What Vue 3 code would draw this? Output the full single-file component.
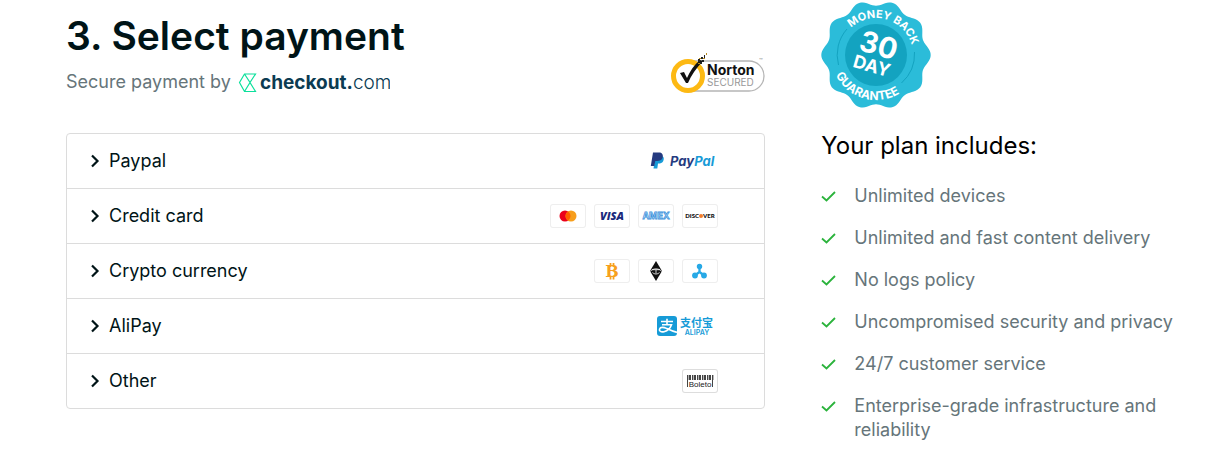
<script setup>
import { ref } from 'vue'

const selected = ref('')
const methods = [
  { id: 'paypal', label: 'Paypal' },
  { id: 'card', label: 'Credit card' },
  { id: 'crypto', label: 'Crypto currency' },
  { id: 'alipay', label: 'AliPay' },
  { id: 'other', label: 'Other' },
]
const features = [
  'Unlimited devices',
  'Unlimited and fast content delivery',
  'No logs policy',
  'Uncompromised security and privacy',
  '24/7 customer service',
  'Enterprise-grade infrastructure and reliability',
]

// Ten-lobed outline of the guarantee seal
const sealPoints = Array.from({ length: 180 }, (_, i) => {
  const a = (i * Math.PI) / 90
  const r = 52 + 2.7 * Math.cos(10 * a)
  return `${(55 + r * Math.cos(a)).toFixed(2)},${(55 + r * Math.sin(a)).toFixed(2)}`
}).join(' ')

const bars = [0, 2, 3, 5, 7, 8, 10, 12, 13, 15, 17, 18, 20, 22, 23, 25]
</script>

<template>
  <main class="page">
    <section class="payment">
      <h1>3. Select payment</h1>
      <div class="secure">
        <p class="by">
          <span>Secure payment by</span>
          <svg class="checkout" width="152" height="24" viewBox="0 0 152 24" role="img" aria-label="checkout.com">
            <path d="M1.500 12.500 6.500 4h11L12 12.500l5.500 9h-11zM6.500 4 12 12.500l-5.500 9" fill="none" stroke="#0be09b" stroke-width="1.200" />
            <text x="22" y="19" class="brand"><tspan font-weight="700">checkout.</tspan><tspan font-weight="300">com</tspan></text>
          </svg>
        </p>
        <svg class="norton" width="95" height="42" viewBox="0 0 95 42" role="img" aria-label="Norton Secured">
          <rect x="4" y="9" width="90" height="30" rx="15" fill="#fff" stroke="#b5b5b5" stroke-width="1.300" />
          <circle cx="18" cy="24" r="14.500" fill="#fff" stroke="#fdb913" stroke-width="5" />
          <path d="M10 21l4-1 3 6C20 19 24 13 30 8l3 1C26 16 21 24 18 31h-2z" fill="#111" />
          <path d="M28 7h2v3h-2zM31 5h2v2h-2zM32 8h2v2h-2zM34 3h1v3h-1zM30 10h2v2h-2z" fill="#222" />
          <path d="M29 6h2v1h-2zM33 6h2v1h-2zM28 11h2v1h-2zM36 1h1v2h-1z" fill="#b88a1a" />
          <text x="37" y="23" class="n1">Norton</text>
          <text x="37" y="34" class="n2">SECURED</text>
          <text x="89" y="11" class="tm">™</text>
        </svg>
      </div>

      <ul class="methods">
        <li v-for="m in methods" :key="m.id">
          <button type="button" :aria-expanded="selected === m.id" @click="selected = m.id">
            <svg class="chevron" width="10" height="14" viewBox="0 0 10 14" aria-hidden="true">
              <path d="M2 1.500 7.500 7 2 12.500" fill="none" stroke="#001417" stroke-width="2.200" />
            </svg>
            <span class="label">{{ m.label }}</span>

            <svg v-if="m.id === 'paypal'" width="68" height="20" viewBox="0 0 68 20" aria-hidden="true">
              <path d="M5.500 5h5.500c3 0 3.500 3 2 5.500-1 1.500-2.500 2-4.500 2H8L7.300 17.500H3.500z" fill="#179bd7" />
              <path d="M3 1.500h6c3.500 0 4.500 2.500 3.500 5.500-1 2.300-2.700 3-5.500 3H5.300L4.300 15H.8z" fill="#253b80" />
              <text x="20" y="15" class="paypal"><tspan fill="#253b80">Pay</tspan><tspan fill="#179bd7">Pal</tspan></text>
            </svg>

            <span v-else-if="m.id === 'card'" class="cards">
              <svg class="card" width="36" height="24" viewBox="0 0 36 24" aria-hidden="true">
                <circle cx="15" cy="12" r="5.500" fill="#eb001b" />
                <circle cx="21" cy="12" r="5.500" fill="#f79e1b" />
                <path d="M18 7.400a5.500 5.500 0 0 1 0 9.200a5.500 5.500 0 0 1 0-9.200" fill="#ff5f00" />
              </svg>
              <svg class="card" width="36" height="24" viewBox="0 0 36 24" aria-hidden="true">
                <text x="18" y="16" class="visa">VISA</text>
              </svg>
              <svg class="card" width="36" height="24" viewBox="0 0 36 24" aria-hidden="true">
                <text x="18" y="15" class="amex">AMEX</text>
              </svg>
              <svg class="card" width="36" height="24" viewBox="0 0 36 24" aria-hidden="true">
                <text x="17" y="14" class="discover" text-anchor="end">DISC</text>
                <circle cx="19" cy="12" r="2" fill="#f47b29" />
                <text x="21" y="14" class="discover">VER</text>
              </svg>
            </span>

            <span v-else-if="m.id === 'crypto'" class="cards">
              <svg class="card" width="36" height="24" viewBox="0 0 36 24" aria-hidden="true">
                <path d="M16.500 4v4M19.500 4v4M16.500 16.500v4M19.500 16.500v4" stroke="#f7a01d" stroke-width="1.800" />
                <text x="18" y="18" class="bitcoin">B</text>
              </svg>
              <svg class="card" width="36" height="24" viewBox="0 0 36 24" aria-hidden="true">
                <path d="M18 2 24 12 18 22 12 12z" fill="#111" />
                <path d="M12.500 12.500c1.500-3.500 9.500-3.500 11 0M14 10.700h8M14.500 13.500c2 2 5 2 7 0M18 11v3.500" fill="none" stroke="#fff" stroke-width=".8" />
              </svg>
              <svg class="card" width="36" height="24" viewBox="0 0 36 24" aria-hidden="true">
                <path d="M17.500 8v5l-4 3M17.500 13l4 3" fill="none" stroke="#27a9e6" stroke-width="2.300" />
                <circle cx="17.500" cy="7.500" r="2.700" fill="#27a9e6" />
                <circle cx="13" cy="16.500" r="2.900" fill="#27a9e6" />
                <circle cx="22" cy="16.500" r="2.900" fill="#27a9e6" />
              </svg>
            </span>

            <svg v-else-if="m.id === 'alipay'" width="61" height="20" viewBox="0 0 61 20" aria-hidden="true">
              <rect width="20" height="20" rx="3" fill="#169bd7" />
              <path d="M4 5.500h12M10 2.800v5.700M5 8.700h9.500c-1 3-4 6-7.500 7-3 .7-5-.6-4.500-2.500.8-2.700 4.500-2 7-.8 3.500 1.700 6.500 3.200 10.500 4" fill="none" stroke="#fff" stroke-width="1.600" />
              <text x="23" y="11" class="zhi">支付宝</text>
              <text x="40" y="19" class="ali">ALIPAY</text>
            </svg>

            <svg v-else class="card boleto" width="36" height="24" viewBox="0 0 36 24" aria-hidden="true">
              <rect v-for="(b, i) in bars" :key="b" :x="5 + b" y="6" :width="i % 3 ? 1 : 1.400" height="5" fill="#444" />
              <path d="M5.500 6v12M30.500 6v12" stroke="#444" />
              <text x="18" y="18" class="bol">Boleto</text>
            </svg>
          </button>
        </li>
      </ul>
    </section>

    <aside class="plan">
      <svg class="seal" width="110" height="110" viewBox="0 0 110 110" role="img" aria-label="30 day money back guarantee">
        <defs>
          <path id="arc-top" d="M18 55a37 37 0 0 1 74 0" />
          <path id="arc-bottom" d="M10 55a45 45 0 0 0 90 0" />
        </defs>
        <polygon :points="sealPoints" fill="#2bbcd9" />
        <circle cx="55" cy="55" r="31" fill="#13a3c0" />
        <path d="M26 29a39 39 0 0 0-8.500 36M93.500 52a39 39 0 0 1-13 31" fill="none" stroke="#13a3c0" />
        <g transform="rotate(16 55 55)" fill="#fff">
          <text class="ring"><textPath href="#arc-top" startOffset="50%">MONEY BACK</textPath></text>
          <text class="ring lower"><textPath href="#arc-bottom" startOffset="50%">GUARANTEE</textPath></text>
          <text x="55" y="55" class="thirty">30</text>
          <text x="54" y="73" class="day">DAY</text>
        </g>
      </svg>
      <h2>Your plan includes:</h2>
      <ul class="features">
        <li v-for="f in features" :key="f">
          <svg width="16" height="24" viewBox="0 0 16 24" aria-hidden="true">
            <path d="M1 12.500 5.500 16.500 14 8" fill="none" stroke="#2bb33c" stroke-width="1.800" />
          </svg>
          <span>{{ f }}</span>
        </li>
      </ul>
    </aside>
  </main>
</template>

<style>
body {
  margin: 0;
  background: #fff;
}
</style>

<style scoped>
.page {
  display: grid;
  grid-template-columns: 35fr 18fr;
  gap: 56px;
  padding: 0 47px 0 66px;
  font-family: Inter, "Liberation Sans", "Noto Sans CJK SC", sans-serif;
  font-size: 18px;
  line-height: 24px;
  color: #001417;
}
ul {
  list-style: none;
  margin: 0;
  padding: 0;
}
svg {
  flex: none;
}
.payment {
  padding-top: 12px;
}
h1 {
  margin: 0;
  font-size: 39px;
  line-height: 48px;
  font-weight: 600;
}
.secure {
  display: flex;
  justify-content: space-between;
  align-items: flex-end;
  height: 34px;
  margin-bottom: 39px;
}
.by {
  display: flex;
  gap: 7px;
  margin: 0;
  color: #66757a;
}
.brand {
  font-size: 19px;
  fill: #0b3b52;
}
.n1 {
  font-size: 14px;
  font-weight: 700;
  fill: #111;
}
.n2 {
  font-size: 10px;
  fill: #999;
}
.tm {
  font-size: 6px;
  fill: #888;
}
.methods {
  border: 1px solid #dcdcdc;
  border-radius: 4px;
}
.methods li + li {
  border-top: 1px solid #dcdcdc;
}
.methods button {
  display: flex;
  align-items: center;
  width: 100%;
  height: 54px;
  padding: 0 46px 0 23px;
  border: 0;
  background: none;
  font: inherit;
  color: inherit;
  text-align: left;
  cursor: pointer;
}
.label {
  flex: 1;
  margin-left: 9px;
}
.cards {
  display: flex;
  gap: 8px;
}
.card {
  border-radius: 3px;
  box-shadow: inset 0 0 0 1px #eee;
}
.boleto {
  box-shadow: inset 0 0 0 1px #ddd;
}
.paypal {
  font-size: 13px;
  font-weight: 700;
  font-style: italic;
}
.visa {
  font: italic 800 11px "Open Sans", sans-serif;
  fill: #1a2a7c;
  text-anchor: middle;
}
.amex {
  font: 700 9px Inter, sans-serif;
  fill: #fff;
  stroke: #3a92dc;
  stroke-width: 0.8px;
  text-anchor: middle;
}
.discover {
  font: 800 6px Lato, sans-serif;
  fill: #222;
}
.bitcoin {
  font: 700 16px "DejaVu Serif", serif;
  fill: #f7a01d;
  text-anchor: middle;
}
.zhi {
  font: 700 11px "Noto Sans CJK SC", sans-serif;
  fill: #169bd7;
}
.ali {
  font: 600 7px Inter, sans-serif;
  fill: #169bd7;
  text-anchor: middle;
}
.bol {
  font: 8px "Liberation Sans", sans-serif;
  fill: #222;
  text-anchor: middle;
}
.seal {
  display: block;
}
.ring {
  font-size: 11px;
  font-weight: 700;
  text-anchor: middle;
}
.lower {
  font-size: 12px;
}
.thirty {
  font-size: 29px;
  font-weight: 700;
  text-anchor: middle;
}
.day {
  font-size: 18px;
  font-weight: 700;
  text-anchor: middle;
}
h2 {
  margin: 20px 0 22px;
  font-size: 24px;
  line-height: 32px;
  font-weight: 400;
  color: #000;
}
.features {
  display: grid;
  gap: 18px;
}
.features li {
  display: flex;
  gap: 17px;
  color: #66757a;
}
</style>
